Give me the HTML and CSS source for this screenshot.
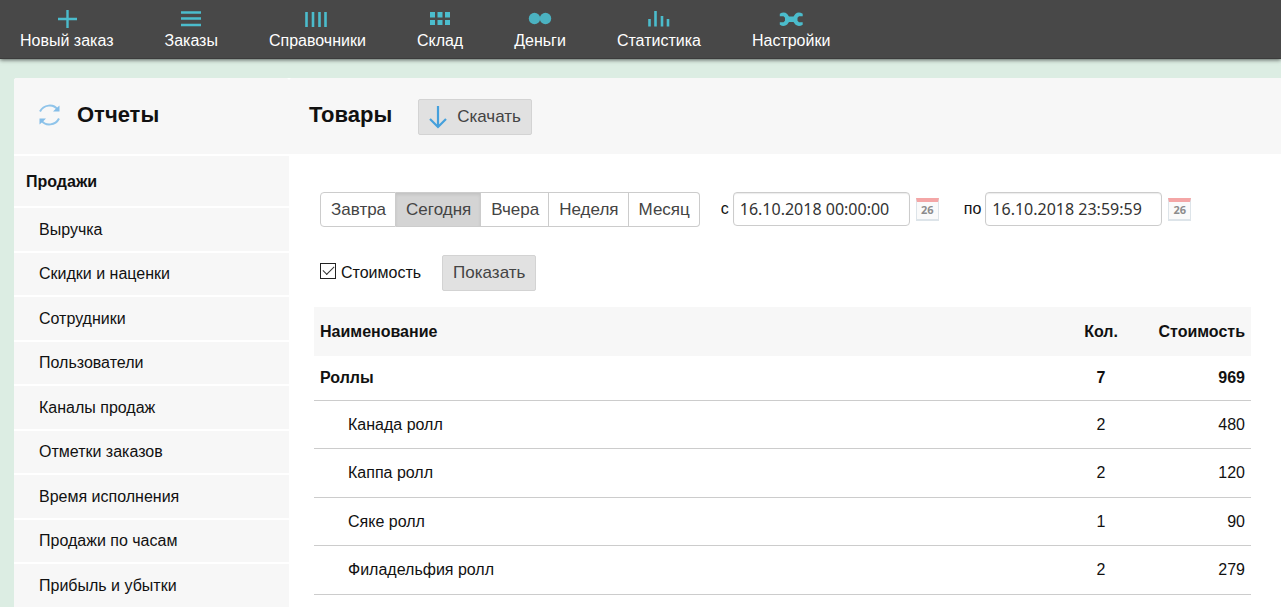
FILE: index.html
```html
<!DOCTYPE html>
<html lang="ru">
<head>
<meta charset="utf-8">
<title>Отчеты</title>
<link rel="stylesheet" href="styles.css">
</head>
<body>
<header class="topbar">
  <nav class="nav">
    <a class="nav-link" href="#"><svg class="nav-icon" viewBox="0 0 24 18"><path d="M12.500 0v18M3 9h19" stroke="#4bbccc" stroke-width="2.400" fill="none"/></svg>Новый заказ</a>
    <a class="nav-link" href="#"><svg class="nav-icon" viewBox="0 0 24 18"><path d="M2 2.500h20M2 8.500h20M2 15h20" stroke="#4bbccc" stroke-width="2.600" fill="none"/></svg>Заказы</a>
    <a class="nav-link" href="#"><svg class="nav-icon" viewBox="0 0 24 18"><path d="M1.500 2v15M8 2v15M14.500 2v15M20.500 2v15" stroke="#4bbccc" stroke-width="2.600" fill="none"/></svg>Справочники</a>
    <a class="nav-link" href="#"><svg class="nav-icon" viewBox="0 0 24 18"><path d="M2 2h5v5.500H2zM9.500 2h5v5.500h-5zM17 2h5v5.500h-5zM2 10h5v5H2zM9.500 10h5v5h-5zM17 10h5v5h-5z" fill="#4bbccc"/></svg>Склад</a>
    <a class="nav-link" href="#"><svg class="nav-icon" viewBox="0 0 24 18"><circle cx="6.500" cy="8.500" r="5.700" fill="#4bb2c1"/><circle cx="17.500" cy="8.500" r="5.700" fill="#4bb2c1"/></svg>Деньги</a>
    <a class="nav-link" href="#"><svg class="nav-icon" viewBox="0 0 24 18"><path d="M2.500 9v7.500M8.500 1v15.500M15 6v10.500M21 9v7.500" stroke="#4bbccc" stroke-width="2.600" fill="none"/></svg>Статистика</a>
    <a class="nav-link" href="#"><svg class="nav-icon" viewBox="0 0 24 18"><path d="M.8 3.800Q5 1.200 8.200 4L10 6.500h4.500L16.300 4Q19.500 1.200 23.700 3.800V6.200H20L18.500 7.700v3.100L20 12.300h3.700v2.400Q19.500 17.200 16.300 14.500L14.500 12H10l-1.800 2.500Q5 17.200 .8 14.700v-2.400h3.700L6 10.800V7.700L4.500 6.200H.8z" fill="#4bbccc"/></svg>Настройки</a>
  </nav>
</header>
<div class="panel">
  <aside class="sidebar">
    <div class="side-head">
      <svg class="refresh" viewBox="0 0 22 22"><g fill="none" stroke="#8fc4ea" stroke-width="2"><path d="M1 7.500C4.500 .5 14.500 -.5 18.500 5.500"/><path d="M20 14.500C16.500 21.500 6.500 22.500 2.500 16.500"/></g><path d="M20.500 1.500v6H14l2.500-2.500zM.5 20.500v-6H7L4.500 17z" fill="#84bde8"/></svg>
      <h1 class="title">Отчеты</h1>
    </div>
    <div class="side-group">Продажи</div>
    <nav class="side-list">
      <a class="side-link" href="#">Выручка</a>
      <a class="side-link" href="#">Скидки и наценки</a>
      <a class="side-link" href="#">Сотрудники</a>
      <a class="side-link" href="#">Пользователи</a>
      <a class="side-link" href="#">Каналы продаж</a>
      <a class="side-link" href="#">Отметки заказов</a>
      <a class="side-link" href="#">Время исполнения</a>
      <a class="side-link" href="#">Продажи по часам</a>
      <a class="side-link" href="#">Прибыль и убытки</a>
    </nav>
  </aside>
  <main class="main">
    <div class="main-head">
      <h2 class="title">Товары</h2>
      <button class="btn" type="button"><svg class="down" viewBox="0 0 18 24"><path d="M9 1v21M1 14l8 8 8-8" fill="none" stroke="#45a0dc" stroke-width="2.200"/></svg>Скачать</button>
    </div>
    <form class="report">
      <div class="filters">
        <div class="segments">
          <button class="segment" type="button">Завтра</button>
          <button class="segment active" type="button">Сегодня</button>
          <button class="segment" type="button">Вчера</button>
          <button class="segment" type="button">Неделя</button>
          <button class="segment" type="button">Месяц</button>
        </div>
        <div class="date">
          <label for="from">с</label>
          <input class="date-input" id="from" type="text" value="16.10.2018 00:00:00">
          <button class="calendar" type="button" aria-label="Выбрать дату"><span class="calendar-day">26</span></button>
        </div>
        <div class="date">
          <label for="to">по</label>
          <input class="date-input" id="to" type="text" value="16.10.2018 23:59:59">
          <button class="calendar" type="button" aria-label="Выбрать дату"><span class="calendar-day">26</span></button>
        </div>
      </div>
      <div class="options">
        <label class="check"><input class="check-box" type="checkbox" checked>Стоимость</label>
        <button class="btn" type="button">Показать</button>
      </div>
      <table class="table">
        <thead>
          <tr><th class="name">Наименование</th><th class="qty">Кол.</th><th class="cost">Стоимость</th></tr>
        </thead>
        <tbody>
          <tr class="group"><td class="name">Роллы</td><td class="qty">7</td><td class="cost">969</td></tr>
          <tr><td class="name">Канада ролл</td><td class="qty">2</td><td class="cost">480</td></tr>
          <tr><td class="name">Каппа ролл</td><td class="qty">2</td><td class="cost">120</td></tr>
          <tr><td class="name">Сяке ролл</td><td class="qty">1</td><td class="cost">90</td></tr>
          <tr><td class="name">Филадельфия ролл</td><td class="qty">2</td><td class="cost">279</td></tr>
        </tbody>
      </table>
    </form>
  </main>
</div>
</body>
</html>
```
FILE: styles.css
```css
* { box-sizing: border-box; }

body {
  margin: 0;
  min-height: 100vh;
  display: flex;
  flex-direction: column;
  background: #dcede3;
  color: #111;
  font: 16px/20px "Liberation Sans", Arial, sans-serif;
}

button, input { font: inherit; color: inherit; margin: 0; }

a { color: inherit; text-decoration: none; }

.topbar {
  padding: 10px 20px 7px;
  background: #484848;
  border-bottom: 1px solid #3c3c3c;
  box-shadow: 0 1px 4px rgba(0, 0, 0, .6);
}

.nav { display: flex; gap: 51px; }

.nav-link {
  display: flex;
  flex-direction: column;
  align-items: center;
  gap: 3px;
  color: #fff;
}

.nav-icon { width: 24px; height: 18px; }

.panel {
  flex: 1;
  display: flex;
  margin: 19px 0 0 14px;
  background: #fff;
  border-radius: 3px 0 0 0;
}

.sidebar {
  width: 275px;
  flex: none;
  display: flex;
  flex-direction: column;
  gap: 2px;
}

.side-head, .main-head {
  display: flex;
  align-items: center;
  height: 76px;
  background: #f7f7f7;
}

.side-head {
  gap: 16px;
  padding: 0 25px 2px;
  border-radius: 3px 3px 0 0;
}

.refresh { width: 22px; height: 22px; }

.title {
  margin: 0;
  font-size: 22px;
  line-height: 28px;
}

.side-group {
  padding: 16px 12px 14px;
  background: #f7f7f7;
  font-weight: bold;
}

.side-list {
  display: grid;
  grid-auto-rows: 43px 42px;
  gap: 2px;
}

.side-link {
  display: flex;
  align-items: center;
  padding: 0 25px;
  background: #f7f7f7;
}

.main { flex: 1; }

.main-head {
  gap: 26px;
  padding: 2px 20px 0;
  border-radius: 3px 0 0 0;
}

.main-head .title { padding-bottom: 4px; }

.btn {
  display: flex;
  align-items: center;
  gap: 10px;
  height: 36px;
  padding: 0 10px;
  background: #e1e1e1;
  border: 1px solid #d3d3d3;
  border-radius: 2px;
  color: #444;
  font-size: 17px;
}

.down { width: 18px; height: 24px; }

.report { padding: 38px 30px 0 25px; }

.filters {
  display: flex;
  flex-wrap: wrap;
  align-items: flex-start;
  gap: 21px;
  padding-left: 6px;
}

.segments { display: flex; }

.segment {
  height: 35px;
  padding: 0 9px 0 10px;
  background: #fff;
  border: 1px solid #ccc;
  border-left-width: 0;
  color: #444;
  font-size: 17px;
}

.segment:first-child { border-left-width: 1px; border-radius: 4px 0 0 4px; }
.segment:last-child { border-radius: 0 4px 4px 0; }

.segment.active {
  background: #d4d4d4;
  box-shadow: inset 0 2px 3px rgba(0, 0, 0, .08);
}

.date { display: flex; align-items: center; gap: 4px; }
.date + .date { padding-left: 4px; }

.date-input {
  width: 177px;
  height: 34px;
  padding: 0 6px;
  background: #fff;
  border: 1px solid #ccc;
  border-radius: 4px;
  box-shadow: inset 0 1px 1px rgba(0, 0, 0, .08);
  color: #333;
  font-family: "Noto Sans", sans-serif;
}

.calendar {
  width: 23px;
  height: 23px;
  margin-left: 2px;
  padding: 0;
  background: #fafafa;
  border: 1px solid #dde4e9;
  border-width: 4px 1px 2px;
  border-top-color: #f4a6a6;
}

.calendar-day {
  display: block;
  color: #8c8c8c;
  font: bold 11px/16px "Open Sans", sans-serif;
}

.options {
  display: flex;
  align-items: center;
  gap: 21px;
  margin: 28px 0 16px;
  padding-left: 6px;
}

.check { display: flex; align-items: center; gap: 5px; }

.check-box {
  appearance: none;
  width: 16px;
  height: 16px;
  margin-bottom: 4px;
  display: grid;
  place-content: center;
  background: #fff;
  border: 1px solid #222;
}

.check-box:checked::before {
  content: "";
  width: 10px;
  height: 5px;
  border: solid #333;
  border-width: 0 0 1px 1px;
  transform: translateY(-2px) rotate(-45deg);
}

.table {
  width: 100%;
  border-collapse: separate;
  border-spacing: 0;
}

.table th, .table td { padding: 0 6px; }
.table th { height: 49px; background: #f7f7f7; }
.table td { height: 49px; border-bottom: 1px solid #ccc; }
.table tr:nth-child(even) td { height: 48px; }
.table .group td { height: 45px; font-weight: bold; }
.table .name { text-align: left; }
.table td.name { padding-left: 34px; }
.table .group td.name { padding-left: 6px; }
.table .qty { width: 50px; text-align: center; }
.table .cost { width: 125px; text-align: right; }
```
